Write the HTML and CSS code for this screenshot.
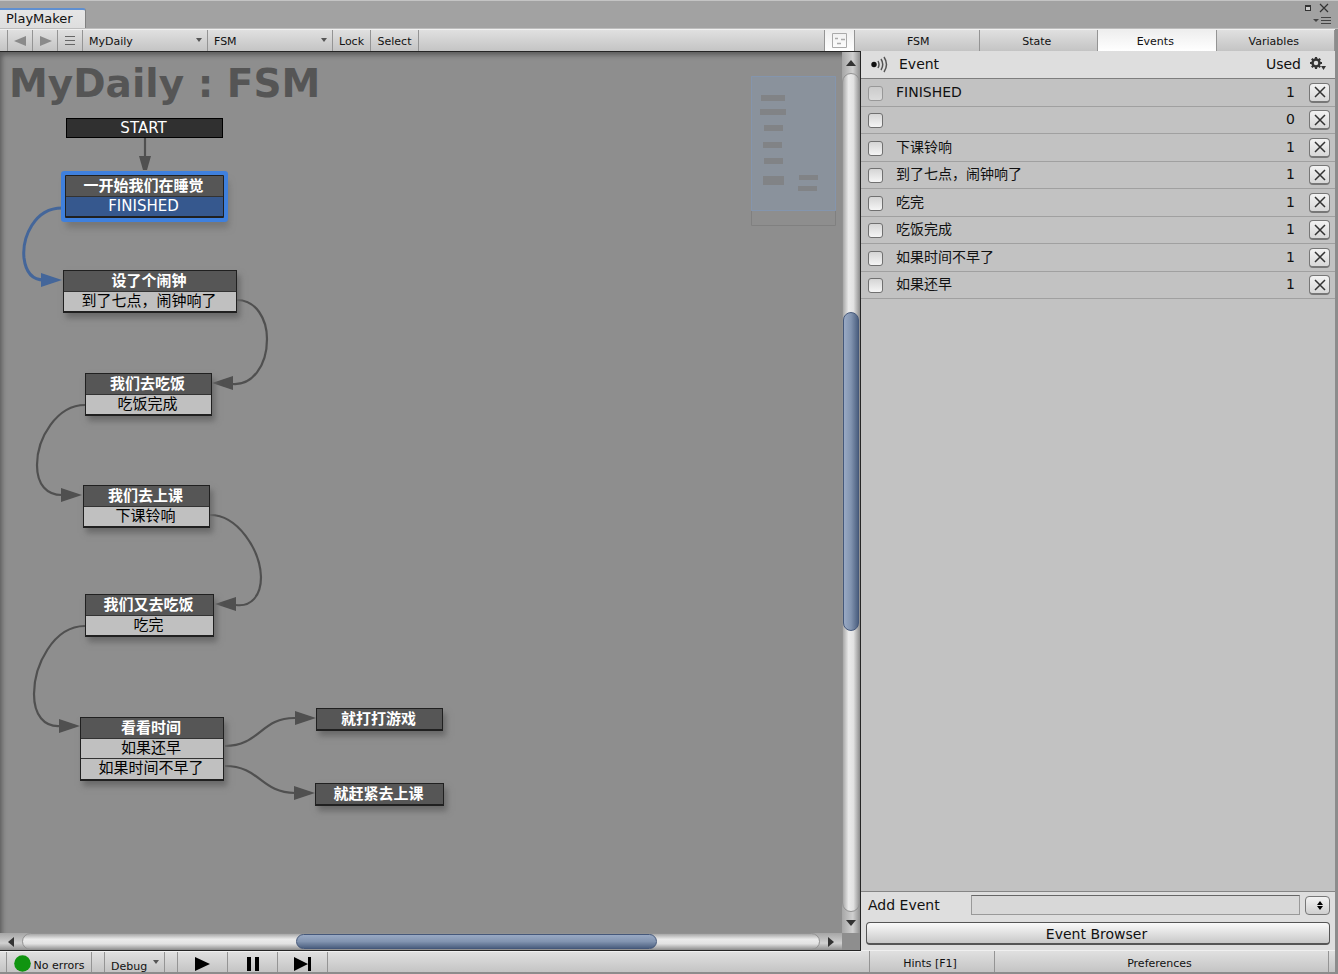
FILE: index.html
```html
<!DOCTYPE html>
<html lang="zh-CN">
<head>
<meta charset="utf-8">
<title>PlayMaker</title>
<link rel="stylesheet" href="styles.css">
</head>
<body>
<header class="titlebar">
  <div class="window-tab">PlayMaker</div>
  <div class="window-controls">
    <svg width="34" height="26" viewBox="0 0 34 26" aria-hidden="true">
      <path d="M5 4h6v6H5z" fill="#333"/><path d="M6 6h4v3H6z" fill="#ccc"/>
      <path d="M20 3l8 8M28 3l-8 8" stroke="#333" stroke-width="1.2"/>
      <path d="M13 18h6l-3 3z" fill="#444"/>
      <path d="M21 16.500h10M21 19.500h10M21 22.500h10" stroke="#444"/>
    </svg>
  </div>
</header>
<div class="workspace">
  <main class="editor">
    <div class="toolbar">
      <button class="tool icon-tool" aria-label="Back"><svg width="13" height="12"><path d="M0 6L12 1v10z" fill="#8a8a8a"/></svg></button>
      <button class="tool icon-tool" aria-label="Forward"><svg width="13" height="12"><path d="M13 6L1 1v10z" fill="#8a8a8a"/></svg></button>
      <button class="tool icon-tool" aria-label="Recent"><svg width="10" height="9"><path d="M0 .500h10M0 4.500h10M0 8.500h10" stroke="#666"/></svg></button>
      <div class="picker wide"><select aria-label="Game object"><option>MyDaily</option></select></div>
      <div class="picker wide"><select aria-label="State machine"><option>FSM</option></select></div>
      <button class="tool lock-tool">Lock</button>
      <button class="tool select-tool">Select</button>
      <button class="tool map-tool" aria-label="Minimap">
        <svg width="15" height="15" fill="none" stroke="#aaa"><path d="M.5.5h14v14H.5z"/><path d="M3 5.500h3M9 6.500h4M5 10.500h4" stroke-width="1.500"/></svg>
      </button>
    </div>
    <div class="stage">
      <section class="canvas" aria-label="Graph">
        <h1 class="graph-title">MyDaily : FSM</h1>
        <svg class="links" aria-hidden="true">
          <g transform="translate(0 -52)" fill="none" stroke="#505050" stroke-width="2.200">
            <path d="M145 138v20"/>
            <path d="M62 208C34 208 22 238 24 258C26 274 33 280 44 280" stroke="#44669a" stroke-width="3"/>
            <path d="M237 300C256 300 267 319 267 339C267 366 252 386 232 384"/>
            <path d="M85 405C57 405 37 438 37 465C37 485 47 495 62 495"/>
            <path d="M210 515C238 515 260 550 261 577C261 596 251 607 236 605"/>
            <path d="M85 626C53 626 34 666 34 694C34 715 44 727 60 726"/>
            <path d="M225 746C260 746 261 717 296 718"/>
            <path d="M225 766C260 766 261 793 295 793"/>
          </g>
          <g transform="translate(0 -52)" fill="#505050">
            <path d="M139 156h12l-4 14h-4z"/>
            <path d="M41 273v14l21-7z" fill="#44669a"/>
            <path d="M212 383l21-7v14z"/><path d="M61 488v14l21-7z"/><path d="M215 604l21-7v14z"/>
            <path d="M59 719v14l21-7z"/><path d="M295 711v14l21-7z"/><path d="M294 786v14l21-7z"/>
          </g>
        </svg>
        <div class="start-node">START</div>
        <article class="node node-sleep selected"><h2>一开始我们在睡觉</h2><p>FINISHED</p></article>
        <article class="node node-alarm"><h2>设了个闹钟</h2><p>到了七点，闹钟响了</p></article>
        <article class="node node-eat"><h2>我们去吃饭</h2><p>吃饭完成</p></article>
        <article class="node node-class"><h2>我们去上课</h2><p>下课铃响</p></article>
        <article class="node node-eat-again"><h2>我们又去吃饭</h2><p>吃完</p></article>
        <article class="node node-time"><h2>看看时间</h2><p>如果还早</p><p>如果时间不早了</p></article>
        <article class="node node-play"><h2>就打打游戏</h2></article>
        <article class="node node-hurry"><h2>就赶紧去上课</h2></article>
        <svg class="minimap" width="85" height="150" aria-label="Minimap">
          <path d="M0 0h85v135H0z" fill="#8a929c"/>
          <path d="M.5.500h84v134H.5z" fill="none" stroke="#8495ad"/>
          <path d="M.5 135v14.500h84V135" fill="none" stroke="#808080"/>
          <path d="M10 19h24v6H10zM9 33h26v6H9zM13 49h19v6H13zM12 66h19v6H12zM13 82h19v6H13zM12 100h21v9H12zM48 99h19v5H48zM47 110h19v5H47z" fill="#818386"/>
        </svg>
      </section>
      <div class="scroll vertical">
        <button class="arrow" aria-label="Scroll up"><svg width="10" height="6"><path d="M0 6l5-6 5 6z" fill="#333"/></svg></button>
        <div class="track"><div class="thumb"></div></div>
        <button class="arrow" aria-label="Scroll down"><svg width="10" height="6"><path d="M0 0l5 6 5-6z" fill="#333"/></svg></button>
      </div>
      <div class="scroll horizontal">
        <button class="arrow" aria-label="Scroll left"><svg width="6" height="10"><path d="M6 0L0 5l6 5z" fill="#333"/></svg></button>
        <div class="track"><div class="thumb"></div></div>
        <button class="arrow" aria-label="Scroll right"><svg width="6" height="10"><path d="M0 0l6 5-6 5z" fill="#333"/></svg></button>
      </div>
    </div>
    <footer class="toolbar status">
      <button class="tool errors"><svg width="17" height="17"><circle cx="8.500" cy="8.500" r="8.300" fill="#109410"/></svg><span>No errors</span></button>
      <div class="picker debug"><select aria-label="Debug"><option>Debug</option></select></div>
      <button class="tool play-tool" aria-label="Play"><svg width="16" height="14"><path d="M0 0l15 7-15 7z"/></svg></button>
      <button class="tool play-tool" aria-label="Pause"><svg width="12" height="14"><path d="M0 0h4v14H0zM8 0h4v14H8z"/></svg></button>
      <button class="tool play-tool" aria-label="Step"><svg width="17" height="14"><path d="M0 0l14 7-14 7zM14 0h3v14h-3z"/></svg></button>
    </footer>
  </main>
  <aside class="inspector">
    <nav class="tabs">
      <button>FSM</button><button>State</button><button class="active">Events</button><button>Variables</button>
    </nav>
    <div class="events">
      <table>
        <thead><tr>
          <th class="check"><svg width="18" height="17" fill="none" stroke="#555" stroke-width="1.500"><circle cx="3" cy="8.500" r="2.700" fill="#111" stroke="none"/><path d="M7 5q2 3.500 0 7M10 3q3.500 5.500 0 11M13 1q5 7.500 0 15"/></svg></th>
          <th class="name heading">Event</th><th class="used heading">Used</th>
          <th class="action"><button class="gear" aria-label="Settings"><svg width="18" height="15"><circle cx="7" cy="7" r="3.500" fill="none" stroke="#333" stroke-width="2.500"/><path d="M7 1v2.500M7 10.500V13M1 7h2.500M10.500 7H13M2.800 2.800l1.700 1.700M9.500 9.500l1.700 1.700M2.800 11.200l1.700-1.700M9.500 4.500l1.700-1.700" stroke="#333" stroke-width="2.200"/><path d="M12 10h5l-2.500 4z" fill="#333"/></svg></button></th>
        </tr></thead>
        <tbody>
          <tr><td class="check"><input type="checkbox" id="e1" disabled></td><td class="name"><label for="e1">FINISHED</label></td><td class="used">1</td><td class="action"><button class="remove" aria-label="Delete FINISHED"><svg width="12" height="12"><path d="M1 1l10 10M11 1L1 11"/></svg></button></td></tr>
          <tr><td class="check"><input type="checkbox" id="e2" aria-label="Event"></td><td class="name"></td><td class="used">0</td><td class="action"><button class="remove" aria-label="Delete"><svg width="12" height="12"><path d="M1 1l10 10M11 1L1 11"/></svg></button></td></tr>
          <tr><td class="check"><input type="checkbox" id="e3"></td><td class="name"><label for="e3">下课铃响</label></td><td class="used">1</td><td class="action"><button class="remove" aria-label="Delete 下课铃响"><svg width="12" height="12"><path d="M1 1l10 10M11 1L1 11"/></svg></button></td></tr>
          <tr><td class="check"><input type="checkbox" id="e4"></td><td class="name"><label for="e4">到了七点，闹钟响了</label></td><td class="used">1</td><td class="action"><button class="remove" aria-label="Delete 到了七点，闹钟响了"><svg width="12" height="12"><path d="M1 1l10 10M11 1L1 11"/></svg></button></td></tr>
          <tr><td class="check"><input type="checkbox" id="e5"></td><td class="name"><label for="e5">吃完</label></td><td class="used">1</td><td class="action"><button class="remove" aria-label="Delete 吃完"><svg width="12" height="12"><path d="M1 1l10 10M11 1L1 11"/></svg></button></td></tr>
          <tr><td class="check"><input type="checkbox" id="e6"></td><td class="name"><label for="e6">吃饭完成</label></td><td class="used">1</td><td class="action"><button class="remove" aria-label="Delete 吃饭完成"><svg width="12" height="12"><path d="M1 1l10 10M11 1L1 11"/></svg></button></td></tr>
          <tr><td class="check"><input type="checkbox" id="e7"></td><td class="name"><label for="e7">如果时间不早了</label></td><td class="used">1</td><td class="action"><button class="remove" aria-label="Delete 如果时间不早了"><svg width="12" height="12"><path d="M1 1l10 10M11 1L1 11"/></svg></button></td></tr>
          <tr><td class="check"><input type="checkbox" id="e8"></td><td class="name"><label for="e8">如果还早</label></td><td class="used">1</td><td class="action"><button class="remove" aria-label="Delete 如果还早"><svg width="12" height="12"><path d="M1 1l10 10M11 1L1 11"/></svg></button></td></tr>
        </tbody>
      </table>
    </div>
    <div class="add-panel">
      <div class="add-row">
        <label for="add">Add Event</label>
        <input type="text" id="add">
        <button class="stepper" aria-label="Choose event"><svg width="6" height="9"><path d="M0 4l3-4 3 4zM0 5l3 4 3-4z"/></svg></button>
      </div>
      <button class="browser">Event Browser</button>
    </div>
    <footer class="toolbar help">
      <button class="tool hints">Hints [F1]</button>
      <button class="tool prefs">Preferences</button>
    </footer>
  </aside>
</div>
</body>
</html>
```
FILE: styles.css
```css
* { box-sizing: border-box; }
body {
  margin: 0;
  height: 100vh;
  display: flex;
  flex-direction: column;
  padding: 0 3px 2px 0;
  background: #8c8c8c;
  color: #111;
  font: 14px/18px "DejaVu Sans", "Noto Sans CJK SC", sans-serif;
  overflow: hidden;
}
button, select, input { font: inherit; color: inherit; margin: 0; }
button { padding: 0; border: 0; background: none; }
svg { display: block; flex: none; }

.titlebar {
  display: flex;
  justify-content: space-between;
  height: 29px;
  margin-right: -3px;
  border-top: 1px solid #c4c4c4;
  border-bottom: 1px solid #bdbdbd;
  background: #a2a2a2;
  flex: none;
}
.window-tab {
  margin-top: 7px;
  padding: 0 12px 0 6px;
  border-top: 2px solid #5f8fd0;
  border-right: 1px solid #808080;
  border-radius: 0 3px 0 0;
  background: linear-gradient(#e6e6e6, #dedede);
  font-size: 13px;
}
.window-controls { padding-right: 4px; }
.workspace { flex: 1; display: flex; min-height: 0; }
.editor { flex: 1; min-width: 0; display: flex; flex-direction: column; }

.toolbar {
  display: flex;
  flex: none;
  height: 22px;
  padding-left: 7px;
  border-top: 1px solid #f0f0f0;
  background: linear-gradient(#e0e0e0, #c4c4c4);
  font-size: 11px;
  line-height: 20px;
}
.tool {
  display: flex;
  align-items: center;
  justify-content: center;
  padding: 2px 5px 0;
  border-right: 1px solid #949494;
}
.icon-tool { width: 25px; padding: 0; }
.icon-tool:first-child { width: 26px; border-left: 1px solid #949494; }
.picker { position: relative; border-right: 1px solid #949494; }
.picker.wide { width: 125px; }
.picker select {
  appearance: none;
  width: 100%;
  height: 100%;
  padding: 2px 16px 0 6px;
  border: 0;
  background: none;
}
.picker::after {
  content: "";
  position: absolute;
  right: 5px;
  top: 8px;
  border: 3px solid transparent;
  border-top: 4px solid #555;
  border-bottom: 0;
}
.lock-tool { width: 38px; }
.select-tool { width: 48px; }
.map-tool {
  width: 31px;
  padding: 0;
  margin-left: auto;
  margin-right: 6px;
  border-left: 1px solid #949494;
  background: linear-gradient(#eee, #fff);
}

.stage {
  flex: 1;
  min-height: 0;
  display: grid;
  grid-template: 1fr 17px / 1fr 18px;
  border: 1px solid #252525;
  border-left: 0;
  background: #8e8e8e;
}
.canvas {
  position: relative;
  overflow: hidden;
  box-shadow: inset 4px 5px 5px -2px #5c5c5c;
}
.graph-title {
  margin: 0;
  padding: 8px 9px;
  color: #555;
  font-size: 39px;
  line-height: 48px;
}
.links { position: absolute; inset: 0; width: 100%; height: 100%; }
.minimap { position: absolute; right: 6px; top: 24px; }
.start-node, .node { position: absolute; text-align: center; }
.start-node {
  left: 66px;
  top: 66px;
  width: 157px;
  height: 20px;
  padding-right: 2px;
  border: 1px solid #000;
  background: #303030;
  color: #fff;
  font-size: 15px;
  line-height: 19px;
}
.node {
  border: 1px solid #202020;
  border-bottom-width: 2px;
  box-shadow: 3px 5px 6px #6a6a6a;
  font-size: 15px;
  line-height: 20px;
}
.node h2 {
  margin: 0;
  height: 20px;
  padding-right: 2px;
  background: #565656;
  color: #fff;
  font-size: 15px;
  line-height: 20px;
}
.node p { margin: 0; height: 20px; padding-right: 2px; border-top: 1px solid #333; background: #c0c0c0; color: #000; line-height: 19px; }
.node.selected { border-radius: 1px; box-shadow: 0 0 0 4px #3f80dd, 3px 8px 6px 2px #777; }
.selected p { background: #36588e; color: #fff; }
.node p + p { height: 21px; }
.node-sleep { left: 65px; top: 123px; width: 159px; }
.node-alarm { left: 63px; top: 218px; width: 174px; }
.node-eat { left: 85px; top: 321px; width: 127px; }
.node-class { left: 83px; top: 433px; width: 127px; }
.node-eat-again { left: 85px; top: 542px; width: 129px; }
.node-time { left: 80px; top: 665px; width: 144px; }
.node-play { left: 316px; top: 656px; width: 127px; }
.node-hurry { left: 315px; top: 731px; width: 129px; }

.scroll { display: flex; }
.arrow { display: flex; align-items: center; justify-content: center; flex: none; }
.track { flex: 1; display: flex; border: 1px solid #929292; border-radius: 9px; }
.track::before, .track::after { content: ""; }
.thumb { border: 1px solid #45587a; border-radius: 9px; }
.vertical { flex-direction: column; background: linear-gradient(90deg, #a6a6a6, #d0d0d0 60%, #909090); }
.vertical .arrow { height: 21px; }
.vertical .track { flex-direction: column; background: linear-gradient(90deg, #a8a8a8, #ebebeb 35%, #e2e2e2 65%, #999); }
.vertical .track::before { flex: 239; }
.vertical .track::after { flex: 281; }
.vertical .thumb { flex: 317; background: linear-gradient(90deg, #99a9c4, #8294b0 50%, #4c6080); }
.horizontal { background: linear-gradient(#a6a6a6, #d0d0d0 60%, #909090); }
.horizontal .arrow { width: 22px; }
.horizontal .track { background: linear-gradient(#a8a8a8, #ebebeb 35%, #e2e2e2 65%, #999); }
.horizontal .track::before { flex: 274; }
.horizontal .track::after { flex: 163; }
.horizontal .thumb { flex: 360; background: linear-gradient(#99a9c4, #8294b0 50%, #4c6080); }

.status { padding-left: 6px; height: 21px; }
.errors { width: 86px; padding: 2px 4px 0; gap: 3px; border-left: 1px solid #949494; }
.errors span { padding-top: 5px; }
.status .debug { width: 61px; margin: 0 12px; border-left: 1px solid #949494; }
.debug select { padding-top: 5px; }
.play-tool { width: 50px; padding-top: 4px; }
.debug + .play-tool { width: 51px; border-left: 1px solid #949494; }

.inspector {
  width: 474px;
  flex: none;
  display: flex;
  flex-direction: column;
  background: #c2c2c2;
}
.tabs {
  display: flex;
  height: 22px;
  flex: none;
  border-top: 1px solid #f0f0f0;
  background: linear-gradient(#e0e0e0, #c4c4c4);
  font-size: 11px;
}
.tabs button { flex: 1; border-right: 1px solid #949494; padding: 2px 3px 0 0; }
.tabs .active { background: linear-gradient(#eee, #fff); }
.events { flex: 1; min-height: 0; }
table { width: 100%; border-collapse: separate; border-spacing: 0; table-layout: fixed; }
thead tr { height: 28px; background: #dedede; }
tbody tr { height: 27px; }
tbody tr:nth-child(odd) { height: 28px; }
th, td { padding: 0; border-bottom: 1px solid #a0a0a0; font-weight: normal; text-align: left; vertical-align: middle; }
th { border-bottom-color: #7e7e7e; }
.check { width: 35px; padding-left: 7px; }
th.check { padding-left: 10px; }
.name, .used { padding-bottom: 2px; }
.name.heading { padding-left: 3px; }
.used { width: 50px; padding-right: 14px; text-align: right; }
.used.heading { padding-right: 8px; }
.action { width: 26px; }
.gear { padding-top: 2px; }
.check input {
  display: block;
  appearance: none;
  width: 15px;
  height: 15px;
  margin-top: 1px;
  border: 1px solid #707070;
  border-radius: 3px;
  background: linear-gradient(#d5d5d5, #f5f5f5);
}
.check input:disabled { opacity: .5; }
.remove {
  display: flex;
  align-items: center;
  justify-content: center;
  width: 21px;
  height: 20px;
  border: 1px solid #777;
  border-bottom-width: 2px;
  border-radius: 4px;
  background: linear-gradient(#f3f3f3, #d8d8d8);
  stroke: #333;
  stroke-width: 1.5px;
}
.add-panel { flex: none; padding: 3px 5px 5px; border-top: 1px solid #858585; background: #dedede; }
.add-row { display: flex; align-items: center; gap: 5px; margin-bottom: 7px; }
.add-row label { width: 100px; padding-left: 2px; }
.add-row input { flex: 1; min-width: 0; height: 20px; border: 1px solid #999; border-top-color: #666; background: #d8d8d8; }
.stepper {
  display: flex;
  align-items: center;
  justify-content: center;
  width: 25px;
  height: 19px;
  padding-left: 4px;
  border: 1px solid #777;
  border-radius: 4px;
  background: linear-gradient(#f3f3f3, #cfcfcf);
}
.browser {
  display: block;
  width: 100%;
  height: 23px;
  padding: 2px 3px 0 0;
  border: 1px solid #555;
  border-bottom-width: 2px;
  border-radius: 4px;
  background: linear-gradient(#fafafa, #c8c8c8);
}
.help { height: 22px; padding: 0 6px 0 8px; }
.help .tool { padding: 4px 8px 0 4px; }
.hints { width: 126px; border-left: 1px solid #949494; }
.prefs { flex: 1; }
```
